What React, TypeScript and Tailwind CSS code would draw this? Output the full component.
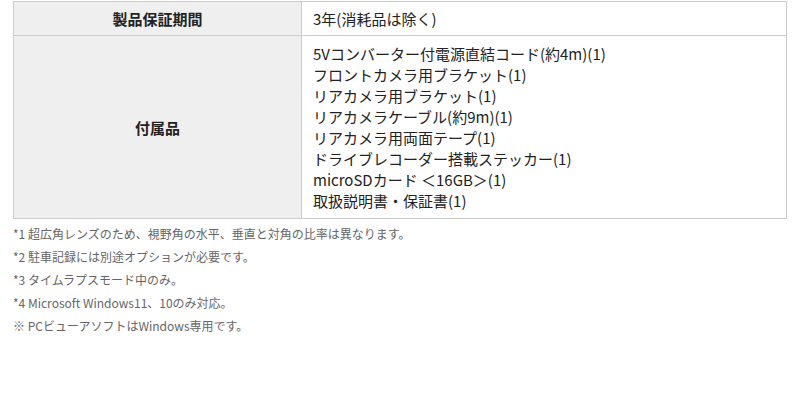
const accessories = [
    "5Vコンバーター付電源直結コード(約4m)(1)",
    "フロントカメラ用ブラケット(1)",
    "リアカメラ用ブラケット(1)",
    "リアカメラケーブル(約9m)(1)",
    "リアカメラ用両面テープ(1)",
    "ドライブレコーダー搭載ステッカー(1)",
    "microSDカード ＜16GB＞(1)",
    "取扱説明書・保証書(1)",
];

const notes = [
    "*1 超広角レンズのため、視野角の水平、垂直と対角の比率は異なります。",
    "*2 駐車記録には別途オプションが必要です。",
    "*3 タイムラプスモード中のみ。",
    "*4 Microsoft Windows11、10のみ対応。",
    "※ PCビューアソフトはWindows専用です。",
];

const App = () => {
    return (
        <div
            className="h-[400px] w-[800px] bg-white pl-[13px] pr-[13px] pt-[1px] text-[#222]"
            style={{ fontFamily: '"Noto Sans CJK JP", "Noto Sans", sans-serif' }}
        >
            <table className="w-full border-collapse text-[15px] leading-[21px]">
                <tbody>
                    <tr>
                        <th className="w-[288px] border border-[#cccccc] bg-[#efefef] py-[6px] text-center font-bold">
                            製品保証期間
                        </th>
                        <td className="border border-[#cccccc] py-[6px] pl-[11px]">
                            3年(消耗品は除く)
                        </td>
                    </tr>
                    <tr>
                        <th className="border border-[#cccccc] bg-[#efefef] text-center font-bold">
                            付属品
                        </th>
                        <td className="border border-[#cccccc] py-[7px] pl-[11px]">
                            {accessories.map((item) => (
                                <div key={item}>{item}</div>
                            ))}
                        </td>
                    </tr>
                </tbody>
            </table>

            <ul className="mt-[3px] text-[12px] leading-[23px] text-[#666]">
                {notes.map((note) => (
                    <li key={note}>{note}</li>
                ))}
            </ul>
        </div>
    );
};

export default App;
